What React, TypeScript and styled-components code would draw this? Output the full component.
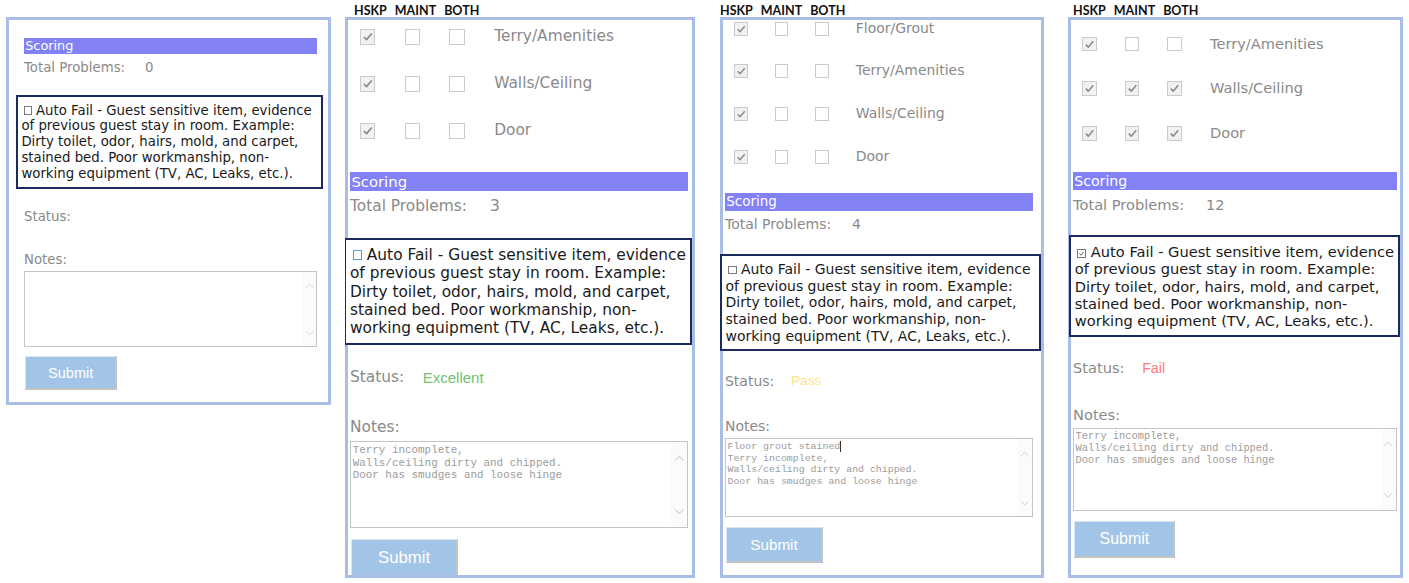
import React from "react"
import styled, { createGlobalStyle } from "styled-components"

const GlobalStyle = createGlobalStyle`
  html, body {
    margin: 0;
    padding: 0;
    background: #ffffff;
  }
  body {
    font-family: "DejaVu Sans", Verdana, sans-serif;
  }
`

// DejaVu Sans runs narrower than the Verdana in the shot, so text is bumped up
const TEXT = 1.1

const Page = styled.div`
  display: flex;
  align-items: flex-start;
  padding-left: 6px;
`

const Column = styled.div<{ $width: number; $offset: number }>`
  width: ${(p) => p.$width}px;
  margin-left: ${(p) => p.$offset}px;
  flex-shrink: 0;
`

const Legend = styled.div<{ $indent: number }>`
  display: flex;
  gap: 8px;
  height: 17px;
  box-sizing: border-box;
  padding: 4px 0 0 ${(p) => p.$indent}px;
  font-family: Lato, "Liberation Sans", sans-serif;
  font-weight: 700;
  font-size: 12.5px;
  line-height: 13px;
  color: #111111;
`

const Frame = styled.div<{
  $height: number
  $size: number
  $top: number
  $left: number
  $right: number
}>`
  position: relative;
  height: ${(p) => p.$height}px;
  box-sizing: border-box;
  overflow: hidden;
  padding: ${(p) => p.$top + 3}px ${(p) => p.$right + 3}px 0
    ${(p) => p.$left + 3}px;
  font-size: ${(p) => p.$size}px;
  display: flex;
  flex-direction: column;

  &::after {
    content: "";
    position: absolute;
    inset: 0;
    border: 3px solid #a9bde7;
    pointer-events: none;
    z-index: 1;
  }
`

const CheckList = styled.div<{ $shift: number }>`
  display: flex;
  flex-direction: column;
  margin-top: ${(p) => p.$shift}em;
  margin-bottom: 1.22em;
`

const ItemRow = styled.div`
  display: flex;
  align-items: center;
  height: 3.36em;
  padding-left: 0.7em;
`

const Cell = styled.div`
  width: 3.2em;
  display: flex;
  align-items: center;
`

const Box = styled.span<{ $checked: boolean }>`
  width: 1.1em;
  height: 1.1em;
  box-sizing: border-box;
  border: 1px solid #cbcbcb;
  background: ${(p) => (p.$checked ? "#f1f1f1" : "#ffffff")};
  display: flex;
  align-items: center;
  justify-content: center;

  svg {
    width: 86%;
    height: 86%;
  }
`

const ItemLabel = styled.span`
  color: #8a8a8a;
  font-size: ${TEXT}em;
  line-height: 1;
`

const ScoreBar = styled.div`
  height: 1.36em;
  line-height: 1.36em;
  background: #8282f6;
  color: #ffffff;
  padding-left: 0.1em;

  span {
    font-size: 1.06em;
  }
`

const InfoRow = styled.div<{ $gap: number }>`
  display: flex;
  align-items: center;
  height: 1.4em;
  margin-top: ${(p) => p.$gap}em;
  color: #8a8a8a;
`

const InfoLabel = styled.span<{ $width: number }>`
  font-size: ${TEXT}em;
  width: ${(p) => p.$width / TEXT}em;
  flex-shrink: 0;
`

const InfoValue = styled.span`
  font-size: ${TEXT}em;
`

const StatusValue = styled.span<{ $tone: string }>`
  font-family: "Liberation Sans", Arial, sans-serif;
  font-size: 1.07em;
  color: ${(p) => p.$tone};
`

const AutoFail = styled.div<{ $bleedLeft: number; $bleedRight: number }>`
  position: relative;
  z-index: 2;
  margin: 1.6em -${(p) => p.$bleedRight}px 0 -${(p) => p.$bleedLeft}px;
  border: 2px solid #1b2b5d;
  background: #ffffff;
  padding: 0.45em 0.2em 0.4em 0.28em;
  color: #1a1a1a;

  p {
    margin: 0;
    font-size: ${TEXT}em;
    line-height: 1.19;
  }
`

const Tick = styled.span<{ $mode: "plain" | "focus" | "checked" }>`
  display: inline-flex;
  align-items: center;
  justify-content: center;
  width: 0.62em;
  height: 0.62em;
  box-sizing: border-box;
  margin: 0 0.3em 0 0.18em;
  vertical-align: 0;
  border: 1px solid ${(p) => (p.$mode === "focus" ? "#4ea3dd" : "#7a7a7a")};

  svg {
    width: 100%;
    height: 100%;
  }
`

const NotesArea = styled.div`
  display: flex;
  height: 6.2em;
  margin-top: 0.3em;
  box-sizing: border-box;
  border: 1px solid #c4c4c4;
  background: #ffffff;
`

const NotesText = styled.div`
  flex: 1;
  padding: 0.2em 0.15em;
  font-family: "Liberation Mono", "Courier New", monospace;
  font-size: 0.78em;
  line-height: 1.15;
  color: #9c9c9c;
  white-space: pre;
`

const Caret = styled.span`
  display: inline-block;
  width: 0;
  height: 1.05em;
  vertical-align: -0.2em;
  border-left: 1px solid #333333;
`

const Gutter = styled.div`
  width: 1.15em;
  background: #fbfbfb;
  display: flex;
  flex-direction: column;
  justify-content: space-between;
  align-items: center;
  padding: 0.9em 0 0.8em;

  svg {
    width: 0.75em;
    height: 0.5em;
  }
`

const SubmitButton = styled.button`
  width: 7.6em;
  height: 2.8em;
  flex-shrink: 0;
  margin: 0.8em 0 0 0.1em;
  box-sizing: border-box;
  background: #a2c4e6;
  border: 1px solid #d9e6f3;
  border-right: 2px solid #c3c3c3;
  border-bottom: 2px solid #c3c3c3;
  color: #ffffff;
  font-family: "Liberation Sans", Arial, sans-serif;
  font-size: 1em;
  padding: 0;

  span {
    font-size: 1.2em;
  }
`

type Item = { label: string; checks: [boolean, boolean, boolean] }

type PanelData = {
  width: number
  offset: number
  size: number
  height: number
  top: number
  left: number
  right: number
  legend: number | null
  shift: number
  items: Item[]
  total: number
  auto: "plain" | "focus" | "checked"
  bleed: [number, number]
  status: string
  tone: string
  notes: string[]
  caret: boolean
}

const GrayCheck = () => (
  <svg viewBox="0 0 12 12" fill="none">
    <polyline
      points="2,6.2 4.7,9 10.2,2.6"
      stroke="#8a8a8a"
      strokeWidth="1.7"
      strokeLinejoin="round"
    />
  </svg>
)

const Chevron = ({ up }: { up: boolean }) => (
  <svg viewBox="0 0 10 6" fill="none">
    <polyline
      points={up ? "1,5 5,1 9,5" : "1,1 5,5 9,1"}
      stroke="#cfcfcf"
      strokeWidth="1"
    />
  </svg>
)

const hskp = (label: string): Item => ({ label, checks: [true, false, false] })
const all = (label: string): Item => ({ label, checks: [true, true, true] })

const notes = [
  "Terry incomplete,",
  "Walls/ceiling dirty and chipped.",
  "Door has smudges and loose hinge",
]

const panels: PanelData[] = [
  {
    width: 325, offset: 0, size: 12.1, height: 388, top: 18, left: 15, right: 11,
    legend: null, shift: 0, items: [], total: 0, auto: "plain", bleed: [8, 6],
    status: "", tone: "#888", notes: [], caret: false,
  },
  {
    width: 350, offset: 14, size: 14, height: 561, top: 0, left: 2, right: 4,
    legend: 9, shift: -0.47,
    items: [hskp("Terry/Amenities"), hskp("Walls/Ceiling"), hskp("Door")],
    total: 3, auto: "focus", bleed: [6, 4],
    status: "Excellent", tone: "#6fc373", notes, caret: false,
  },
  {
    width: 324, offset: 25, size: 12.7, height: 561, top: 0, left: 2, right: 8,
    legend: 0, shift: -1.0,
    items: [hskp("Floor/Grout"), hskp("Terry/Amenities"), hskp("Walls/Ceiling"), hskp("Door")],
    total: 4, auto: "plain", bleed: [5, 8],
    status: "Pass", tone: "#ffe38a", notes: ["Floor grout stained", ...notes], caret: true,
  },
  {
    width: 335, offset: 24, size: 13.3, height: 561, top: 0, left: 2, right: 3,
    legend: 5, shift: 0.13,
    items: [hskp("Terry/Amenities"), all("Walls/Ceiling"), all("Door")],
    total: 12, auto: "checked", bleed: [4, 3],
    status: "Fail", tone: "#ff7b7b", notes, caret: false,
  },
]

const Panel = ({ d }: { d: PanelData }) => (
  <Column $width={d.width} $offset={d.offset}>
    <Legend $indent={d.legend ?? 0}>
      {d.legend !== null && (
        <>
          <span>HSKP</span>
          <span>MAINT</span>
          <span>BOTH</span>
        </>
      )}
    </Legend>
    <Frame $height={d.height} $size={d.size} $top={d.top} $left={d.left} $right={d.right}>
      {d.items.length > 0 && (
        <CheckList $shift={d.shift}>
          {d.items.map((item) => (
            <ItemRow key={item.label}>
              {item.checks.map((on, i) => (
                <Cell key={i}>
                  <Box $checked={on}>{on && <GrayCheck />}</Box>
                </Cell>
              ))}
              <ItemLabel>{item.label}</ItemLabel>
            </ItemRow>
          ))}
        </CheckList>
      )}
      <ScoreBar>
        <span>Scoring</span>
      </ScoreBar>
      <InfoRow $gap={0.37}>
        <InfoLabel $width={10}>Total Problems:</InfoLabel>
        <InfoValue>{d.total}</InfoValue>
      </InfoRow>
      <AutoFail $bleedLeft={d.bleed[0]} $bleedRight={d.bleed[1]}>
        <p>
          <Tick $mode={d.auto}>
            {d.auto === "checked" && (
              <svg viewBox="0 0 10 10" fill="none">
                <polyline points="2,5 4.2,7.4 8.2,2.6" stroke="#555" strokeWidth="1.3" />
              </svg>
            )}
          </Tick>
          Auto Fail - Guest sensitive item, evidence of previous guest stay in
          room. Example: Dirty toilet, odor, hairs, mold, and carpet, stained
          bed. Poor workmanship, non-working equipment (TV, AC, Leaks, etc.).
        </p>
      </AutoFail>
      <InfoRow $gap={1.6}>
        <InfoLabel $width={5.2}>Status:</InfoLabel>
        <StatusValue $tone={d.tone}>{d.status}</StatusValue>
      </InfoRow>
      <InfoRow $gap={2.15}>
        <InfoLabel $width={5}>Notes:</InfoLabel>
      </InfoRow>
      <NotesArea>
        <NotesText>
          {d.notes.map((line, i) => (
            <div key={i}>
              {line}
              {d.caret && i === 0 && <Caret />}
            </div>
          ))}
        </NotesText>
        <Gutter>
          <Chevron up />
          <Chevron up={false} />
        </Gutter>
      </NotesArea>
      <SubmitButton type="button">
        <span>Submit</span>
      </SubmitButton>
    </Frame>
  </Column>
)

export default function App() {
  return (
    <>
      <GlobalStyle />
      <Page>
        {panels.map((d, i) => (
          <Panel key={i} d={d} />
        ))}
      </Page>
    </>
  )
}
